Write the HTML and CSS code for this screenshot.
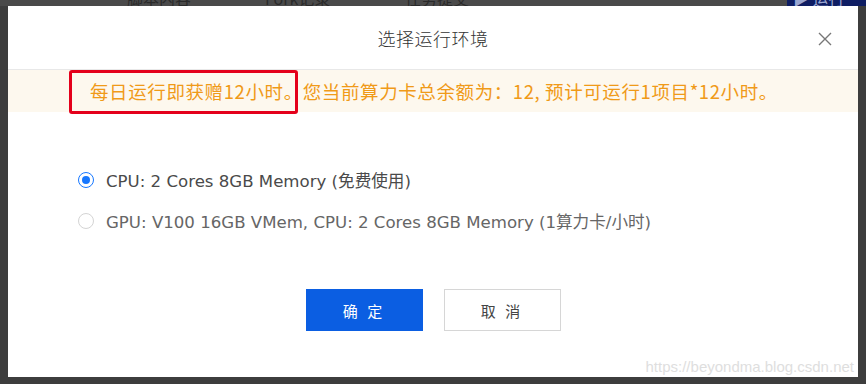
FILE: index.html
```html
<!DOCTYPE html>
<html lang="zh">
<head>
<meta charset="utf-8">
<link rel="stylesheet" href="styles.css">
</head>
<body>
<div class="backdrop">
  <div class="nav">
    <span class="nav-item n1">脚本内容</span>
    <span class="nav-item n2">Fork记录</span>
    <span class="nav-item n3">任务提交</span>
    <span class="run-btn">▶ 运行</span>
  </div>
</div>
<div class="modal">
  <div class="modal-header">
    <span class="modal-title">选择运行环境</span>
    <span class="close">
      <svg width="16" height="16" viewBox="0 0 16 16"><path d="M2 2 L14 14 M14 2 L2 14" stroke="#777" stroke-width="1.4" fill="none"/></svg>
    </span>
  </div>
  <div class="notice">
    <span class="notice-text">每日运行即获赠12小时。您当前算力卡总余额为：12, 预计可运行1项目*12小时。</span>
    <span class="highlight"></span>
  </div>
  <div class="options">
    <label class="option checked"><span class="radio"></span><span class="opt-text">CPU: 2 Cores 8GB Memory (免费使用)</span></label>
    <label class="option"><span class="radio"></span><span class="opt-text muted">GPU: V100 16GB VMem, CPU: 2 Cores 8GB Memory (1算力卡/小时)</span></label>
  </div>
  <div class="actions">
    <button class="btn primary">确 定</button>
    <button class="btn">取 消</button>
  </div>
  <div class="watermark">https://beyondma.blog.csdn.net</div>
</div>
</body>
</html>
```
FILE: styles.css
```css
html, body {
  margin: 0;
  padding: 0;
}
body {
  width: 866px;
  height: 384px;
  background: #3d3d3d;
  overflow: hidden;
  position: relative;
  font-family: "DejaVu Sans", "Noto Sans CJK SC", sans-serif;
}
.backdrop {
  height: 6px;
  overflow: hidden;
  background: #4a4a4a;
}
.nav {
  position: relative;
  height: 6px;
}
.nav-item {
  position: absolute;
  top: -12px;
  font-size: 16px;
  line-height: 20px;
  color: #2a2a2a;
  font-family: "Noto Sans CJK SC", sans-serif;
}
.n1 { left: 127px; }
.n2 { left: 265px; }
.n3 { left: 405px; }
.run-btn {
  position: absolute;
  left: 787px;
  top: -12px;
  width: 90px;
  height: 20px;
  background: #0e1d63;
  color: #9aa6d0;
  font-size: 16px;
  line-height: 20px;
  padding-left: 6px;
  font-family: "Noto Sans CJK SC", sans-serif;
}
.modal {
  position: absolute;
  left: 8px;
  top: 6px;
  width: 850px;
  height: 371px;
  background: #fff;
}
.modal-header {
  height: 63px;
  border-bottom: 1px solid #e8e8e8;
  display: flex;
  align-items: center;
  justify-content: center;
  position: relative;
}
.modal-title {
  font-family: "Noto Sans CJK SC", sans-serif;
  font-size: 18px;
  font-weight: 300;
  color: #333;
  letter-spacing: 0.5px;
}
.close {
  position: absolute;
  right: 25px;
  top: 25px;
  width: 16px;
  height: 16px;
  display: flex;
}
.notice {
  height: 42px;
  background: #fdf8ee;
  display: flex;
  align-items: center;
  padding-left: 82px;
  position: relative;
}
.notice-text {
  font-family: "Noto Sans CJK SC", sans-serif;
  font-size: 18.5px;
  color: #f09a18;
  letter-spacing: 0.6px;
  white-space: nowrap;
}
.highlight {
  position: absolute;
  left: 61px;
  top: 0;
  width: 223px;
  height: 38px;
  border: 3px solid #e4001b;
  border-radius: 3px;
}
.options {
  padding: 56px 0 0 70px;
  display: flex;
  flex-direction: column;
  gap: 17px;
}
.option {
  display: flex;
  align-items: center;
  height: 24px;
}
.radio {
  width: 16px;
  height: 16px;
  border: 1px solid #d4d4d4;
  border-radius: 50%;
  box-sizing: border-box;
  margin-right: 12px;
  position: relative;
  flex: none;
}
.option.checked .radio {
  border-color: #1677ff;
}
.option.checked .radio::after {
  content: "";
  position: absolute;
  left: 3px;
  top: 3px;
  width: 8px;
  height: 8px;
  border-radius: 50%;
  background: #1677ff;
}
.opt-text {
  font-size: 16.6px;
  color: #4a4a4a;
  white-space: nowrap;
}
.opt-text.muted {
  color: #666;
}
.actions {
  display: flex;
  justify-content: center;
  gap: 21px;
  margin-top: 56px;
}
.btn {
  width: 117px;
  height: 42px;
  border: 1px solid #d6d6d6;
  background: #fff;
  color: #444;
  font-family: "Noto Sans CJK SC", sans-serif;
  font-size: 15px;
  letter-spacing: 3px;
  padding: 0;
}
.btn.primary {
  background: #0b5ee2;
  border-color: #0b5ee2;
  color: #fff;
}
.watermark {
  position: absolute;
  right: 4px;
  bottom: 2px;
  font-family: "Liberation Sans", sans-serif;
  font-size: 15px;
  color: #dedede;
}
```
